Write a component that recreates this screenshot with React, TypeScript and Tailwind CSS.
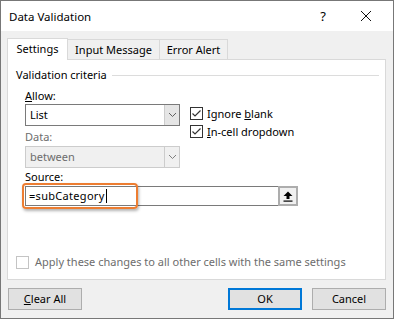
import React from "react";

const font = { fontFamily: '"Noto Sans", "Open Sans", sans-serif' };

function Chevron({ color = "#606060" }: { color?: string }) {
  return (
    <svg width="9" height="6" viewBox="0 0 9 6">
      <path d="M1 1 L4.5 4.5 L8 1" fill="none" stroke={color} strokeWidth="1" />
    </svg>
  );
}

function Check() {
  return (
    <div className="w-[13px] h-[13px] border border-[#333333] bg-white flex items-center justify-center shrink-0">
      <svg width="11" height="11" viewBox="0 0 11 11">
        <path d="M1.5 5.5 L4 8 L9.5 2.5" fill="none" stroke="#333333" strokeWidth="1.2" />
      </svg>
    </div>
  );
}

export default function App() {
  return (
    <div
      className="w-[394px] h-[319px] border border-[#777777] flex flex-col text-[11px] leading-[16px] text-black bg-[#f0f0f0] overflow-hidden"
      style={font}
    >
      {/* Title bar */}
      <div className="h-[30px] bg-white flex items-center pl-[8px] shrink-0">
        <span className="text-[11.5px] leading-none mt-[1px]">Data Validation</span>
        <div className="flex-1" />
        <span className="text-[13px] leading-none mr-[34px] mt-[1px]">?</span>
        <svg width="12" height="12" viewBox="0 0 12 12" className="mr-[21px]">
          <path d="M1 1 L11 11 M11 1 L1 11" stroke="#111" strokeWidth="1" />
        </svg>
      </div>

      {/* Body */}
      <div className="flex-1 flex flex-col px-[6px] pt-[7px]">
        {/* Tabs */}
        <div className="flex items-end h-[21px] relative z-10">
          <div className="h-[22px] w-[61px] bg-white border border-[#d9d9d9] border-b-0 flex items-center justify-center -mb-px">
            <span className="mt-[-1px]">Settings</span>
          </div>
          <div className="h-[20px] w-[92px] border border-[#d9d9d9] border-b-0 border-l-0 flex items-center justify-center">
            Input Message
          </div>
          <div className="h-[20px] w-[68px] border border-[#d9d9d9] border-b-0 border-l-0 flex items-center justify-center">
            Error Alert
          </div>
        </div>

        {/* Panel */}
        <div className="h-[221px] w-[379px] bg-white border border-[#d9d9d9] flex flex-col pl-[8px]">
          {/* group header */}
          <div className="flex items-center h-[16px] mt-[7px] pr-[6px]">
            <span>Validation criteria</span>
            <div className="flex-1 h-px bg-[#dcdcdc] ml-[5px]" />
          </div>

          <div className="pl-[9px] flex flex-col">
            {/* Allow */}
            <div className="mt-[5px] h-[16px]">
              <span className="underline">A</span>llow:
            </div>
            <div className="flex">
              <div className="w-[155px] flex flex-col">
                <div className="h-[22px] border border-[#7a7a7a] flex items-stretch">
                  <div className="flex-1 flex items-center pl-[4px]">List</div>
                  <div className="w-[15px] bg-[#e5e5e5] border-l border-[#cccccc] flex items-center justify-center">
                    <Chevron />
                  </div>
                </div>
                <div className="mt-[3px] h-[16px] text-[#6d6d6d]">Data:</div>
                <div className="mt-[1px] h-[22px] border border-[#cccccc] bg-[#f0f0f0] flex items-stretch">
                  <div className="flex-1 flex items-center pl-[4px] text-[#6d6d6d]">between</div>
                  <div className="w-[15px] border-l border-[#cccccc] flex items-center justify-center">
                    <Chevron color="#808080" />
                  </div>
                </div>
              </div>
              <div className="ml-[10px] flex flex-col gap-[5px] mt-[3px]">
                <div className="flex items-center gap-[4px] h-[13px]">
                  <Check />
                  <span>
                    Ignore <span className="underline">b</span>lank
                  </span>
                </div>
                <div className="flex items-center gap-[4px] h-[13px]">
                  <Check />
                  <span>
                    <span className="underline">I</span>n-cell dropdown
                  </span>
                </div>
              </div>
            </div>

            {/* Source */}
            <div className="mt-[1px] h-[16px]">Source:</div>
            <div className="relative mt-[1px] w-[273px] h-[20px] border border-[#7a7a7a] flex items-stretch">
              <div className="flex-1 flex items-center pl-[3px]">
                <span className="tracking-[0.3px]">=subCategory</span>
                <span className="w-px h-[14px] bg-black ml-px" />
              </div>
              <div className="w-[20px] border-2 border-[#adadad] bg-[#f0f0f0] flex items-center justify-center -my-px -mr-px">
                <svg width="10" height="11" viewBox="0 0 10 11">
                  <path d="M5 0.5 L9.5 5 L6.5 5 L6.5 8 L3.5 8 L3.5 5 L0.5 5 Z" fill="#000" />
                  <rect x="0.5" y="9.5" width="9" height="1.2" fill="#000" />
                </svg>
              </div>
              <div className="absolute left-[-4px] top-[-4px] w-[116px] h-[26px] border-[2.5px] border-[#ed7d31] rounded-[4px] shadow-[1px_2px_3px_rgba(0,0,0,0.3)] pointer-events-none" />
            </div>
          </div>

          <div className="flex-1" />
          {/* Apply */}
          <div className="flex items-center gap-[6px] mb-[9px] text-[#6d6d6d]">
            <div className="w-[13px] h-[13px] border border-[#c4c4c4] bg-white" />
            <span>Apply these changes to all other cells with the same settings</span>
          </div>
        </div>

        {/* Buttons */}
        <div className="flex items-center mt-[8px]">
          <div className="w-[74px] h-[22px] ml-px border border-[#adadad] bg-[#e1e1e1] flex items-center justify-center">
            <span>
              <span className="underline">C</span>lear All
            </span>
          </div>
          <div className="flex-1" />
          <div className="w-[74px] h-[22px] border-2 border-[#0078d7] bg-[#e1e1e1] flex items-center justify-center">
            OK
          </div>
          <div className="w-[74px] h-[22px] ml-[10px] mr-[1px] border border-[#adadad] bg-[#e1e1e1] flex items-center justify-center">
            Cancel
          </div>
        </div>
      </div>
    </div>
  );
}
